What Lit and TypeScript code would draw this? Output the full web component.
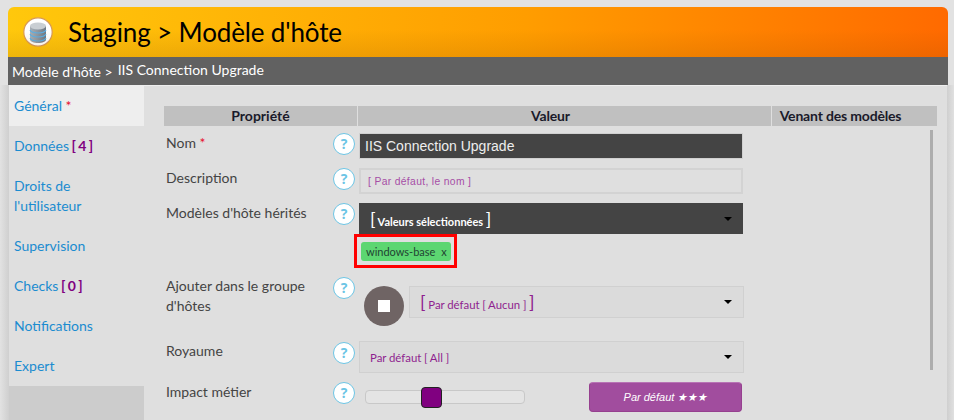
import { LitElement, html, css } from "lit";
import { customElement } from "lit/decorators.js";

@customElement("app-root")
export class AppRoot extends LitElement {
  static styles = css`
    :host { display: block; height: 420px; overflow: hidden; background: #e2e2e2; font-family: Lato, sans-serif; font-size: 14px; color: #444; padding: 7px 6px 0 8px; box-sizing: border-box; width: 954px; position: relative; }
    .panel { width: 940px; height: 500px; background: #dfdfdf; border-radius: 6px 6px 0 0; }
    .head { height: 50px; box-sizing: border-box; border-radius: 6px 6px 0 0; background: linear-gradient(to right, #ffc80c 0%, #ff9d00 55%, #ff6a00 100%); display: flex; align-items: center; position: relative; overflow: hidden; }
    .head::after { content: ""; position: absolute; inset: 0; background: linear-gradient(to bottom, transparent 45%, rgba(120,60,0,.13) 100%); }
    .logo { margin-left: 15px; width: 30px; height: 30px; flex: none; }
    .title { margin-left: 15px; font-size: 26px; letter-spacing: -.14px; color: #000; line-height: 50px; position: relative; z-index: 1; white-space: nowrap; }
    .crumb { height: 28px; background: #616161; color: #fff; display: flex; align-items: center; font-size: 14px; padding-left: 4px; border-bottom: 1px solid #eee; box-sizing: content-box; }
    .crumb .b { margin-left: 5px; position: relative; top: -2px; }
    .body { display: flex; }
    .nav { width: 135px; margin-left: 1px; flex: none; background: #ccc; height: 420px; }
    .navlist { background: #dfdfdf; }
    .item { display: block; padding: 10px 5px; line-height: 20px; color: #1b8cd0; }
    .item.on { background: #eee; }
    .req { color: #e8112d; }
    .count { color: #800080; font-weight: 700; word-spacing: -1px; margin-left: -1px; }
    .main { margin-left: 20px; width: 773px; padding-top: 20px; position: relative; }
    .th { display: grid; grid-template-columns: 193px 413px 165px; gap: 1px; margin-bottom: 7px; }
    .th div { background: #c0c0c0; height: 20px; line-height: 20px; text-align: center; font-weight: 700; color: #1a1a2a; letter-spacing: -.17px; }
    .th div + div { padding-right: 28px; }
    .th div:first-child { letter-spacing: 0; }
    .row { display: grid; grid-template-columns: 169px 22px 1fr; align-items: start; }
    .lab { padding-left: 2px; line-height: 20px; }
    .low .help { margin-top: 1px; }
    .last .lab { padding-top: 1px; }
    .help { width: 22px; height: 22px; box-sizing: border-box; border-radius: 50%; border: 1.5px solid #6cc5e5; background: #fff; color: #6cc5e5; font-weight: 700; font-size: 14px; line-height: 19px; text-align: center; font-family: "Open Sans", sans-serif; }
    .val { margin-left: 4px; width: 384px; }
    .input { height: 26px; box-sizing: border-box; border: 1px solid #d0d0d0; font-family: "Liberation Sans", sans-serif; display: flex; align-items: center; padding-left: 5px; }
    .input.dark { background: #444; color: #eee; font-size: 14px; }
    .input.light { background: #dfdfdf; border-width: 2px; border-color: #d3d3d3; padding-left: 7px; color: #a64ea6; font-size: 10.3px; letter-spacing: .35px; }
    .sel { height: 32px; box-sizing: border-box; width: 385px; display: flex; align-items: center; justify-content: space-between; padding: 0 11px 0 10px; border: 1px solid #d0d0d0; background: #dbdbdb; color: #8f1f8f; font-size: 11.4px; word-spacing: -.2px; }
    .sel.dark { height: 31px; width: 384px; background: #444; color: #fff; border-color: #444; font-weight: 700; font-size: 11px; padding-right: 10px; }
    .br { font-size: 18px; font-weight: 400; line-height: 20px; }
    .caret { width: 0; height: 0; border-left: 4px solid transparent; border-right: 4px solid transparent; border-top: 4px solid #000; }
    .box { display: block; margin-left: -5px; border: 3px solid #f00; padding: 5px 4px 0; height: 34px; box-sizing: border-box; width: 103px; }
    .chip { background: #5cd671; border-radius: 3px; height: 19px; line-height: 19px; padding-left: 5px; color: #243; font-size: 11px; white-space: nowrap; width: 90px; box-sizing: border-box; }
    .chip span { margin-left: 3px; }
    .group { display: flex; align-items: flex-start; margin-left: 9px; margin-top: 10px; }
    .stop { width: 40px; height: 40px; border-radius: 50%; background: #6f6464; display: flex; align-items: center; justify-content: center; flex: none; }
    .stop i { width: 12px; height: 12px; background: #fff; display: block; }
    .group .sel { width: 335px; margin-left: 5px; padding-left: 10px; }
    .imp { display: flex; align-items: center; margin: 1px 0 0 10px; width: 377px; height: 30px; }
    .track { width: 160px; height: 14px; box-sizing: border-box; border: 1px solid #c8c8c8; border-radius: 4px; background: #e4e4e4; position: relative; }
    .thumb { position: absolute; left: 55px; top: -4px; width: 21px; height: 21px; box-sizing: border-box; border: 1px solid #222; border-radius: 4px; background: #800080; }
    .btn { margin-left: 64px; width: 153px; height: 30px; box-sizing: border-box; background: #a14d9e; border: 1px solid #96408f; border-top-color: #b873b5; border-radius: 4px; color: #fff; font-style: italic; font-family: "Liberation Sans", sans-serif; font-size: 11px; text-align: center; line-height: 28px; }
    .scroll { position: absolute; left: 766px; top: 44px; width: 3px; height: 240px; background: #adadad; }
    .side { position: absolute; left: 947px; top: 85px; width: 7px; height: 335px; background: linear-gradient(to right, #cfcfcf, #e0e0e0); }
    .sideL { position: absolute; left: 0; top: 70px; width: 9px; height: 350px; background: linear-gradient(to left, #cfcfcf, #e2e2e2); z-index: -1; }
    .sideLow { position: absolute; left: 0; top: 85px; width: 9px; height: 335px; background: linear-gradient(to left, #cfcfcf, #e2e2e2); }
    .h35 { height: 35px; } .h73 { height: 73px; } .h65 { height: 65px; } .h40 { height: 40px; }
  `;

  render() {
    const help = html`<div class="help">?</div>`;
    return html`
      <div class="panel">
        <div class="head">
          <svg class="logo" viewBox="0 0 30 30">
            <defs>
              <linearGradient id="can" x1="0" x2="1" y1="0" y2="0">
                <stop offset="0" stop-color="#a8afb6"/>
                <stop offset=".5" stop-color="#8d96a0"/>
                <stop offset="1" stop-color="#6f7882"/>
              </linearGradient>
            </defs>
            <circle cx="15" cy="15" r="14.2" fill="#fff" stroke="#d99a55" stroke-width="1.2"/>
            <path d="M7 9v13.5c0 2 3.6 3.6 8 3.6s8-1.6 8-3.6V9z" fill="url(#can)"/>
            <ellipse cx="15" cy="9" rx="8" ry="3.4" fill="#c9ced3"/>
            <path d="M7 13c1 2 4 3 8 3s7-1 8-3M7 17c1 2 4 3 8 3s7-1 8-3M7 21c1 2 4 3 8 3s7-1 8-3" fill="none" stroke="#5ab0e6" stroke-width="1.2"/>
          </svg>
          <div class="title">Staging &gt; Modèle d'hôte</div>
        </div>
        <div class="crumb"><span>Modèle d'hôte &gt;</span><span class="b">IIS Connection Upgrade</span></div>
        <div class="body">
          <div class="nav">
            <div class="navlist">
              <div class="item on">Général <span class="req">*</span></div>
              <div class="item">Données <span class="count">[ 4 ]</span></div>
              <div class="item">Droits de l'utilisateur</div>
              <div class="item">Supervision</div>
              <div class="item">Checks <span class="count">[ 0 ]</span></div>
              <div class="item">Notifications</div>
              <div class="item">Expert</div>
            </div>
          </div>
          <div class="main">
            <div class="th"><div>Propriété</div><div>Valeur</div><div>Venant des modèles</div></div>
            <div class="row h35">
              <div class="lab">Nom <span class="req">*</span></div>${help}
              <div class="val input dark">IIS Connection Upgrade</div>
            </div>
            <div class="row h35">
              <div class="lab">Description</div>${help}
              <div class="val input light">[ Par défaut, le nom ]</div>
            </div>
            <div class="row h73">
              <div class="lab">Modèles d'hôte hérités</div>${help}
              <div class="val">
                <div class="sel dark"><span><span class="br">[</span> Valeurs sélectionnées <span class="br">]</span></span><i class="caret"></i></div>
                <div class="box"><div class="chip">windows-base <span>x</span></div></div>
              </div>
            </div>
            <div class="row h65 low">
              <div class="lab">Ajouter dans le groupe d'hôtes</div>${help}
              <div class="group">
                <div class="stop"><i></i></div>
                <div class="sel"><span><span class="br">[</span> Par défaut [ Aucun ] <span class="br">]</span></span><i class="caret"></i></div>
              </div>
            </div>
            <div class="row h40 low">
              <div class="lab">Royaume</div>${help}
              <div class="val sel"><span>Par défaut [ All ]</span><i class="caret"></i></div>
            </div>
            <div class="row h40 low last">
              <div class="lab">Impact métier</div>${help}
              <div class="imp">
                <div class="track"><div class="thumb"></div></div>
                <div class="btn">Par défaut ★★★</div>
              </div>
            </div>
            <div class="scroll"></div>
          </div>
        </div>
      </div>
      <div class="side"></div>
      <div class="sideLow"></div>
    `;
  }
}
